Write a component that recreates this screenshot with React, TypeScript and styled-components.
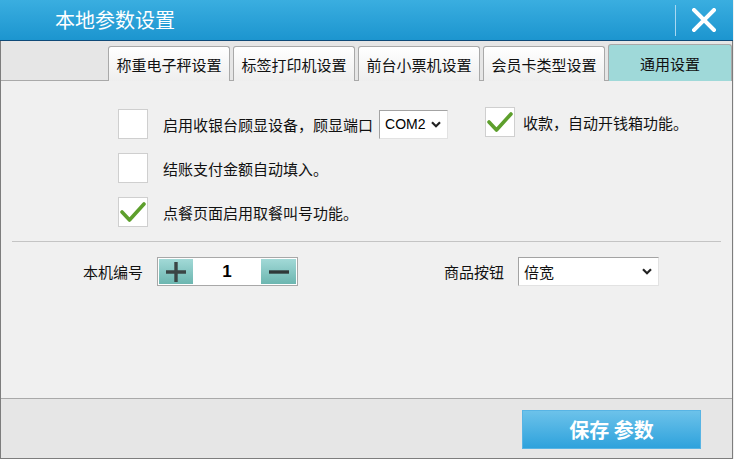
import React from 'react';
import styled, { createGlobalStyle } from 'styled-components';

const Global = createGlobalStyle`
  html, body { margin: 0; padding: 0; background: #f0f0f0; }
  body { font-family: "Noto Sans CJK SC", "Noto Sans", sans-serif; color: #111; }
  * { box-sizing: border-box; }
`;

const Window = styled.div`
  width: 733px;
  height: 459px;
  display: flex;
  flex-direction: column;
`;

const TitleBar = styled.div`
  height: 41px;
  flex: none;
  display: flex;
  align-items: center;
  padding-left: 55px;
  padding-right: 17px;
  background: linear-gradient(#3aaee0, #1c95cf);
  border-bottom: 1px solid #0f4a78;
`;

const Title = styled.div`
  font-size: 20px;
  color: #fff;
  letter-spacing: 0;
  padding-bottom: 2px;
`;

const CloseArea = styled.div`
  margin-left: auto;
  display: flex;
  align-items: center;
  gap: 16px;
  height: 100%;
`;

const CloseDivider = styled.div`
  width: 1px;
  height: 31px;
  background: #a9d8f2;
`;

const Body = styled.div`
  flex: 1;
  display: flex;
  flex-direction: column;
  border: 1px solid #7d7d7d;
  border-top: none;
`;

const TabStrip = styled.div`
  height: 40px;
  flex: none;
  display: flex;
  align-items: flex-end;
  gap: 3px;
  padding-left: 107px;
  background: #e6e6e6;
  border-bottom: 1px solid #a9a9a9;
`;

const Tab = styled.div<{ $active?: boolean }>`
  width: ${(p) => (p.$active ? 'auto' : '122px')};
  flex: ${(p) => (p.$active ? '1' : 'none')};
  height: ${(p) => (p.$active ? '37px' : '35px')};
  margin-bottom: -1px;
  display: flex;
  align-items: center;
  justify-content: center;
  font-size: 15px;
  border: 1px solid #a9a9a9;
  border-bottom: none;
  border-radius: 3px 3px 0 0;
  background: ${(p) => (p.$active ? '#9fd9d9' : 'linear-gradient(#ffffff, #eeeeee)')};
`;

const Content = styled.div`
  flex: 1;
  background: #f0f0f0;
  padding-top: 28px;
  display: flex;
  flex-direction: column;
`;

const OptionsGrid = styled.div`
  display: grid;
  grid-template-columns: 367px auto;
  row-gap: 14px;
  padding-left: 117px;
`;

const Option = styled.div<{ $raise?: boolean }>`
  display: flex;
  align-items: center;
  align-self: start;
  margin-top: ${(p) => (p.$raise ? '-2px' : '0')};
  font-size: 15px;
`;

const Box = styled.div`
  width: 30px;
  height: 30px;
  flex: none;
  background: #fff;
  border: 1px solid #cfcfcf;
  display: flex;
  align-items: center;
  justify-content: center;
`;

const OptionText = styled.span<{ $gap: number }>`
  margin-left: ${(p) => p.$gap}px;
  white-space: nowrap;
`;

const Select = styled.div<{ $w: number }>`
  width: ${(p) => p.$w}px;
  height: 29px;
  background: #fff;
  border: 1px solid;
  border-color: #a3a3a3 #e2e2e2 #e2e2e2 #a3a3a3;
  display: flex;
  align-items: center;
  padding: 0 6px 0 5px;
  justify-content: space-between;
  font-size: 15px;
`;

const ComText = styled.span`
  font-family: "Liberation Sans", Arial, sans-serif;
  font-size: 14px;
  color: #000;
`;

const Separator = styled.div`
  height: 1px;
  background: #c4c4c4;
  margin: 14px 11px 0 11px;
`;

const FieldsRow = styled.div`
  display: grid;
  grid-template-columns: 361px auto;
  padding-left: 82px;
  margin-top: 15px;
`;

const Field = styled.div`
  display: flex;
  align-items: center;
  gap: 14px;
  font-size: 15px;
`;

const Spinner = styled.div`
  width: 141px;
  height: 29px;
  border: 1px solid #a8a8a8;
  background: #fff;
  padding: 1px;
  display: flex;
`;

const SpinButton = styled.div<{ $w: number }>`
  width: ${(p) => p.$w}px;
  display: flex;
  align-items: center;
  justify-content: center;
  background: linear-gradient(#a2d9d7, #6cb6b0);
`;

const SpinValue = styled.div`
  flex: 1;
  display: flex;
  align-items: center;
  justify-content: center;
  font-family: "Liberation Sans", Arial, sans-serif;
  font-weight: bold;
  font-size: 17px;
  color: #000;
`;

const Footer = styled.div`
  height: 60px;
  flex: none;
  background: #e6e6e6;
  border-top: 1px solid #a9a9a9;
  display: flex;
  justify-content: flex-end;
  align-items: flex-start;
  padding: 11px 31px 0 0;
`;

const SaveButton = styled.button`
  width: 179px;
  height: 39px;
  border: 1px solid #58b4e4;
  background: linear-gradient(#6cc2ea, #2ea2dc);
  color: #fff;
  font-family: "Noto Sans CJK SC", sans-serif;
  font-size: 20px;
  font-weight: bold;
  padding: 0;
  cursor: pointer;
`;

const Check = () => (
  <svg width="26" height="22" viewBox="0 0 26 22">
    <path d="M2 11 L9.5 19 L24 3" fill="none" stroke="#5d9f2c" strokeWidth="3.6" strokeLinecap="round" strokeLinejoin="round" />
  </svg>
);

const Chevron = () => (
  <svg width="10" height="7" viewBox="0 0 10 7">
    <path d="M1 1.2 L5 5.2 L9 1.2" fill="none" stroke="#222" strokeWidth="2.2" />
  </svg>
);

const CloseIcon = () => (
  <svg width="24" height="24" viewBox="0 0 24 24">
    <path d="M2 2 L22 22 M22 2 L2 22" stroke="#fff" strokeWidth="4" strokeLinecap="square" />
  </svg>
);

const PlusIcon = () => (
  <svg width="22" height="22" viewBox="0 0 22 22">
    <path d="M1 11 H21 M11 1 V21" stroke="#3b4545" strokeWidth="3.4" />
  </svg>
);

const MinusIcon = () => (
  <svg width="22" height="22" viewBox="0 0 22 22">
    <path d="M1 11 H21" stroke="#2f3838" strokeWidth="3.4" />
  </svg>
);

const tabs = ['称重电子秤设置', '标签打印机设置', '前台小票机设置', '会员卡类型设置'];

export default function App() {
  return (
    <>
      <Global />
      <Window>
        <TitleBar>
          <Title>本地参数设置</Title>
          <CloseArea>
            <CloseDivider />
            <CloseIcon />
          </CloseArea>
        </TitleBar>
        <Body>
          <TabStrip>
            {tabs.map((t) => (
              <Tab key={t}>{t}</Tab>
            ))}
            <Tab $active>通用设置</Tab>
          </TabStrip>
          <Content>
            <OptionsGrid>
              <Option>
                <Box />
                <OptionText $gap={15}>启用收银台顾显设备，顾显端口</OptionText>
                <Select $w={69} style={{ marginLeft: 6 }}>
                  <ComText>COM2</ComText>
                  <Chevron />
                </Select>
              </Option>
              <Option $raise>
                <Box>
                  <Check />
                </Box>
                <OptionText $gap={8}>收款，自动开钱箱功能。</OptionText>
              </Option>
              <Option>
                <Box />
                <OptionText $gap={15}>结账支付金额自动填入。</OptionText>
              </Option>
              <div />
              <Option>
                <Box>
                  <Check />
                </Box>
                <OptionText $gap={15}>点餐页面启用取餐叫号功能。</OptionText>
              </Option>
            </OptionsGrid>
            <Separator />
            <FieldsRow>
              <Field>
                <span>本机编号</span>
                <Spinner>
                  <SpinButton $w={34}>
                    <PlusIcon />
                  </SpinButton>
                  <SpinValue>1</SpinValue>
                  <SpinButton $w={35}>
                    <MinusIcon />
                  </SpinButton>
                </Spinner>
              </Field>
              <Field>
                <span>商品按钮</span>
                <Select $w={141}>
                  <span>倍宽</span>
                  <Chevron />
                </Select>
              </Field>
            </FieldsRow>
          </Content>
          <Footer>
            <SaveButton>保存 参数</SaveButton>
          </Footer>
        </Body>
      </Window>
    </>
  );
}
